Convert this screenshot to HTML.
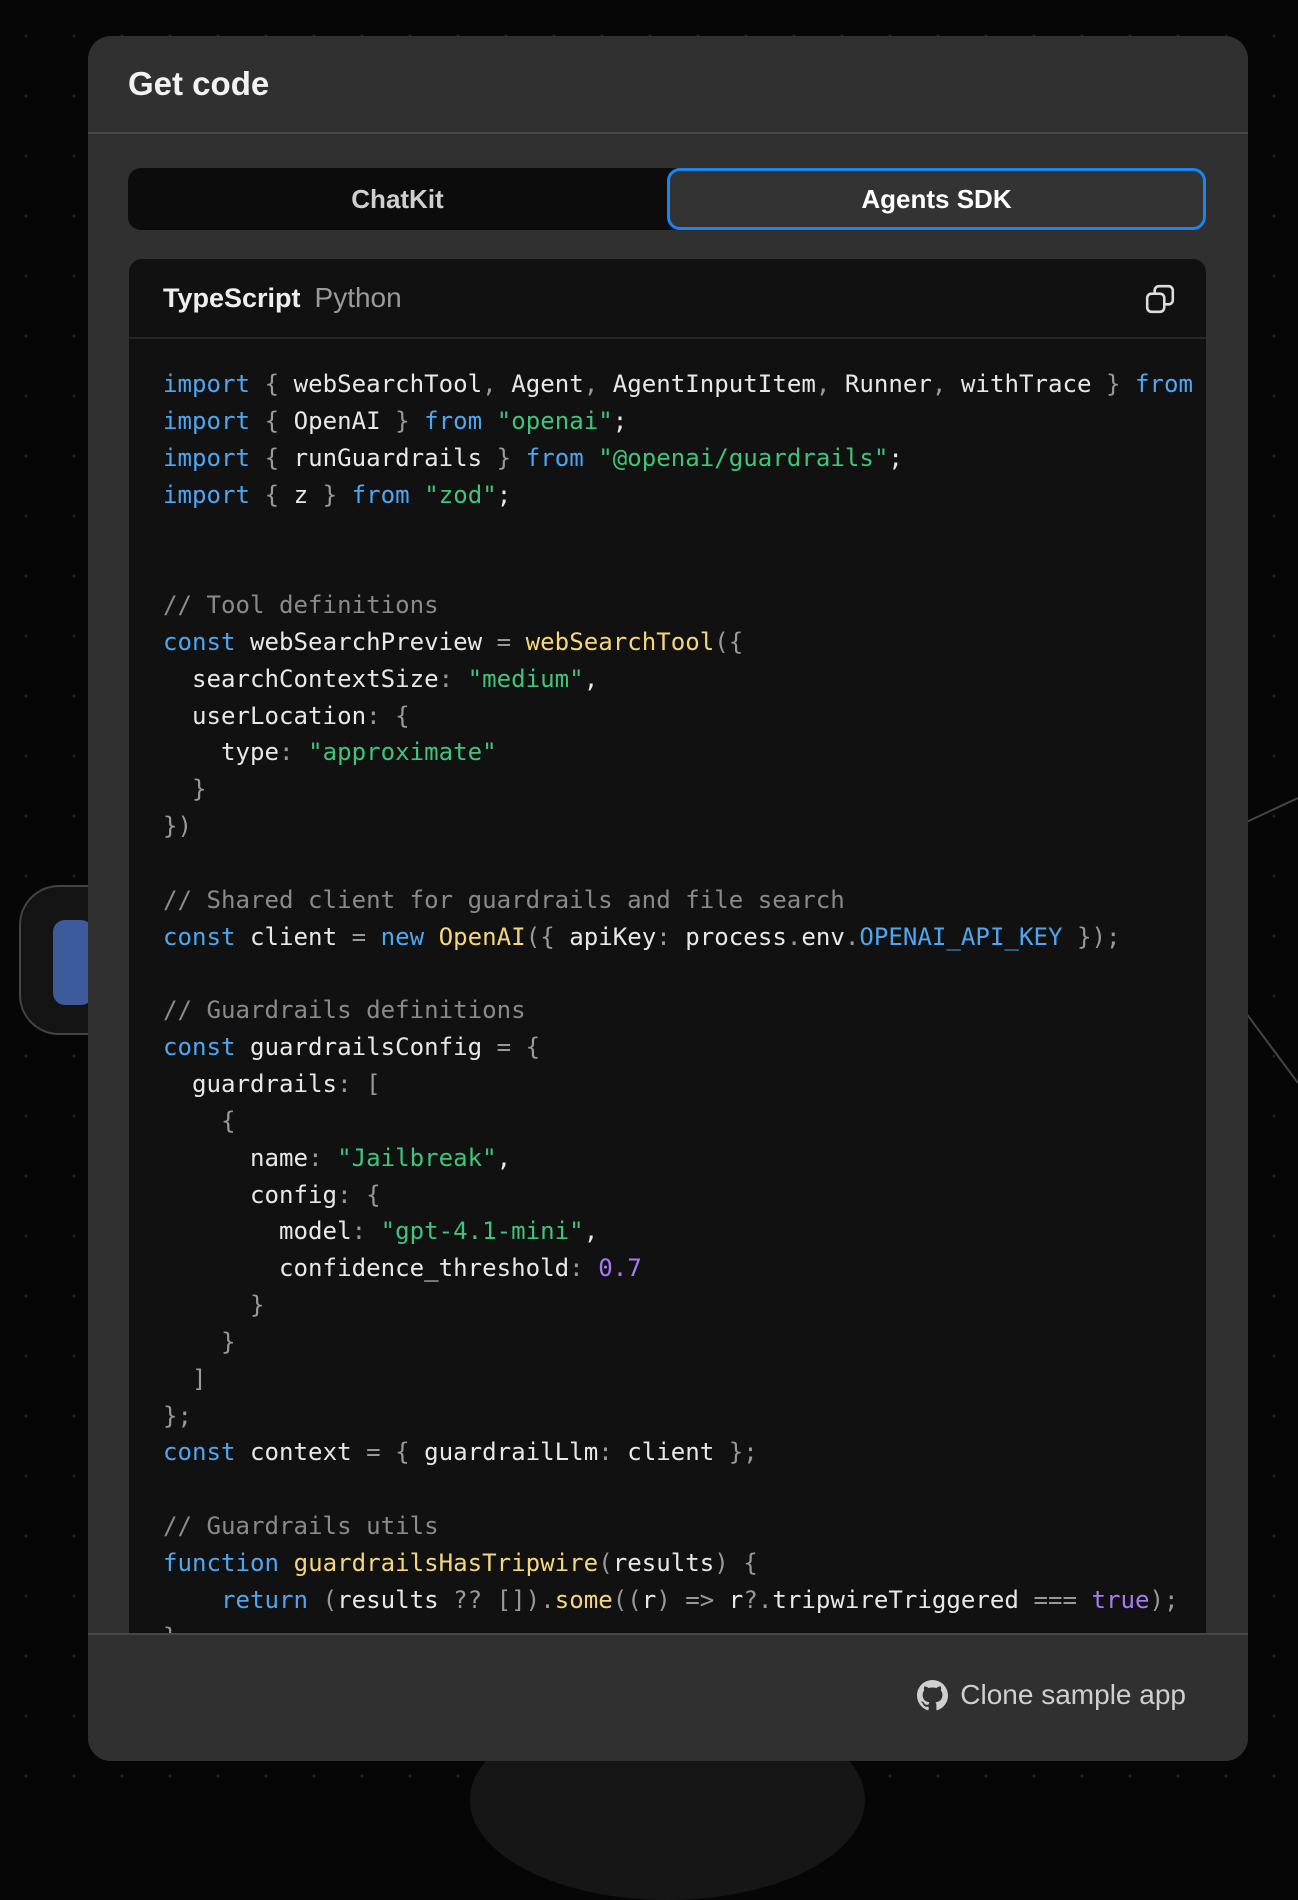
<!DOCTYPE html>
<html><head><meta charset="utf-8"><style>
*{margin:0;padding:0;box-sizing:border-box}
html,body{width:1298px;height:1796px;overflow:hidden;background:#060606;font-family:"Liberation Sans",sans-serif}
.bg{position:absolute;inset:0;background-image:radial-gradient(circle,#1e1e1e 1.3px,transparent 1.8px);background-size:48px 60px;background-position:2px 66px}
.node{position:absolute;left:19px;top:885px;width:110px;height:150px;border:2px solid #444;border-radius:40px;background:#141414}
.node i{position:absolute;left:32px;top:33px;width:40px;height:85px;background:#3d5a9a;border-radius:12px}
.circ{position:absolute;left:470px;top:1700px;width:395px;height:200px;border-radius:50%;background:#161616}
.modal{position:absolute;left:88px;top:36px;width:1160px;height:1725px;background:#303030;border-radius:23px;overflow:hidden}
.hd{height:98px;border-bottom:2px solid #474747;padding-left:40px;font-size:33px;color:#f2f2f2;line-height:96px;font-weight:700}
.tabs{position:absolute;left:40px;top:132px;width:1078px;height:62px;background:#0c0c0c;border-radius:13px}
.t{position:absolute;top:0;height:62px;line-height:62px;text-align:center;font-size:26px;color:#cfcfcf;font-weight:700}
.t1{left:0;width:539px}
.t2{left:539px;width:539px;background:#333;border:3px solid #1a84f0;border-radius:13px;color:#fff;line-height:56px}
.code{position:absolute;left:41px;top:223px;width:1077px;height:1420px;background:#111;border-radius:13px 13px 0 0;overflow:hidden}
.ch{height:80px;border-bottom:2px solid #262626;padding-left:34px;line-height:78px;font-size:27px}
.ch b{color:#eee;font-weight:700}.ch span{color:#9a9a9a;margin-left:14px;font-size:28px}
.cp{position:absolute;right:30px;top:24px}
pre{padding:27px 0 0 34px;font-family:"DejaVu Sans Mono","Liberation Mono",monospace;font-size:24.1px;line-height:36.85px;color:#e8e8e8;white-space:pre}
.k{color:#4ea6f2}.s{color:#3fc47a}.f{color:#f5d77a}.c{color:#8a8a8a}.p{color:#999}.n{color:#a77cf2}
.ft{position:absolute;left:0;top:1597px;width:1160px;height:128px;border-top:2px solid #474747;background:#303030}
.cl{position:absolute;right:62px;top:44px;font-size:28px;color:#cfcfcf;display:flex;align-items:center;gap:12px}
</style></head><body>
<div class="bg"></div>
<div class="node"><i></i></div>
<div class="circ"></div>
<svg style="position:absolute;left:1240px;top:780px" width="58" height="320"><path d="M0 45 L58 18 M0 225 L58 303" stroke="#444" stroke-width="2" fill="none"/></svg>
<div class="modal">
<div class="hd">Get code</div>
<div class="tabs"><div class="t t1">ChatKit</div><div class="t t2">Agents SDK</div></div>
<div class="code">
<div class="ch"><b>TypeScript</b><span>Python</span>
<svg class="cp" width="32" height="32" viewBox="0 0 30 30" fill="none" stroke="#ddd" stroke-width="2.4"><rect x="3" y="10" width="16" height="17" rx="4"/><path d="M10 10V7a4 4 0 0 1 4-4h9a4 4 0 0 1 4 4v9a4 4 0 0 1-4 4h-4"/></svg></div>
<pre><span class="k">import</span> <span class="p">{</span> webSearchTool<span class="p">,</span> Agent<span class="p">,</span> AgentInputItem<span class="p">,</span> Runner<span class="p">,</span> withTrace <span class="p">}</span> <span class="k">from</span> <span class="s">"@openai/agents";</span>
<span class="k">import</span> <span class="p">{</span> OpenAI <span class="p">}</span> <span class="k">from</span> <span class="s">"openai"</span>;
<span class="k">import</span> <span class="p">{</span> runGuardrails <span class="p">}</span> <span class="k">from</span> <span class="s">"@openai/guardrails"</span>;
<span class="k">import</span> <span class="p">{</span> z <span class="p">}</span> <span class="k">from</span> <span class="s">"zod"</span>;


<span class="c">// Tool definitions</span>
<span class="k">const</span> webSearchPreview <span class="p">=</span> <span class="f">webSearchTool</span><span class="p">({</span>
  searchContextSize<span class="p">:</span> <span class="s">"medium"</span>,
  userLocation<span class="p">: {</span>
    type<span class="p">:</span> <span class="s">"approximate"</span>
  <span class="p">}</span>
<span class="p">})</span>

<span class="c">// Shared client for guardrails and file search</span>
<span class="k">const</span> client <span class="p">=</span> <span class="k">new</span> <span class="f">OpenAI</span><span class="p">({</span> apiKey<span class="p">:</span> process<span class="p">.</span>env<span class="p">.</span><span class="k">OPENAI_API_KEY</span> <span class="p">});</span>

<span class="c">// Guardrails definitions</span>
<span class="k">const</span> guardrailsConfig <span class="p">= {</span>
  guardrails<span class="p">: [</span>
    <span class="p">{</span>
      name<span class="p">:</span> <span class="s">"Jailbreak"</span>,
      config<span class="p">: {</span>
        model<span class="p">:</span> <span class="s">"gpt-4.1-mini"</span>,
        confidence_threshold<span class="p">:</span> <span class="n">0.7</span>
      <span class="p">}</span>
    <span class="p">}</span>
  <span class="p">]</span>
<span class="p">};</span>
<span class="k">const</span> context <span class="p">= {</span> guardrailLlm<span class="p">:</span> client <span class="p">};</span>

<span class="c">// Guardrails utils</span>
<span class="k">function</span> <span class="f">guardrailsHasTripwire</span><span class="p">(</span>results<span class="p">) {</span>
    <span class="k">return</span> <span class="p">(</span>results <span class="p">?? []).</span><span class="f">some</span><span class="p">((</span>r<span class="p">) =&gt;</span> r<span class="p">?.</span>tripwireTriggered <span class="p">===</span> <span class="n">true</span><span class="p">);</span>
<span class="p">}</span></pre>
</div>
<div class="ft"><div class="cl"><svg width="31" height="31" viewBox="0 0 16 16" fill="#cfcfcf"><path d="M8 0C3.58 0 0 3.58 0 8c0 3.54 2.29 6.530 5.47 7.590.4.07.55-.17.55-.38 0-.19-.01-.82-.01-1.49-2.01.37-2.530-.49-2.690-.94-.09-.23-.48-.94-.82-1.130-.28-.15-.68-.52-.01-.53.63-.01 1.080.58 1.230.82.72 1.210 1.870.87 2.330.66.07-.52.28-.87.51-1.070-1.780-.2-3.640-.89-3.640-3.950 0-.87.31-1.590.82-2.150-.08-.2-.36-1.020.08-2.120 0 0 .67-.21 2.200.82.64-.18 1.320-.27 2-.27.68 0 1.360.09 2 .27 1.530-1.040 2.200-.82 2.200-.82.44 1.100.16 1.920.08 2.120.51.56.82 1.270.82 2.150 0 3.070-1.870 3.750-3.650 3.950.29.25.54.73.54 1.480 0 1.070-.01 1.930-.01 2.200 0 .21.15.46.55.38A8.013 8.013 0 0016 8c0-4.420-3.580-8-8-8z"/></svg>Clone sample app</div></div>
</div>
</body></html>
